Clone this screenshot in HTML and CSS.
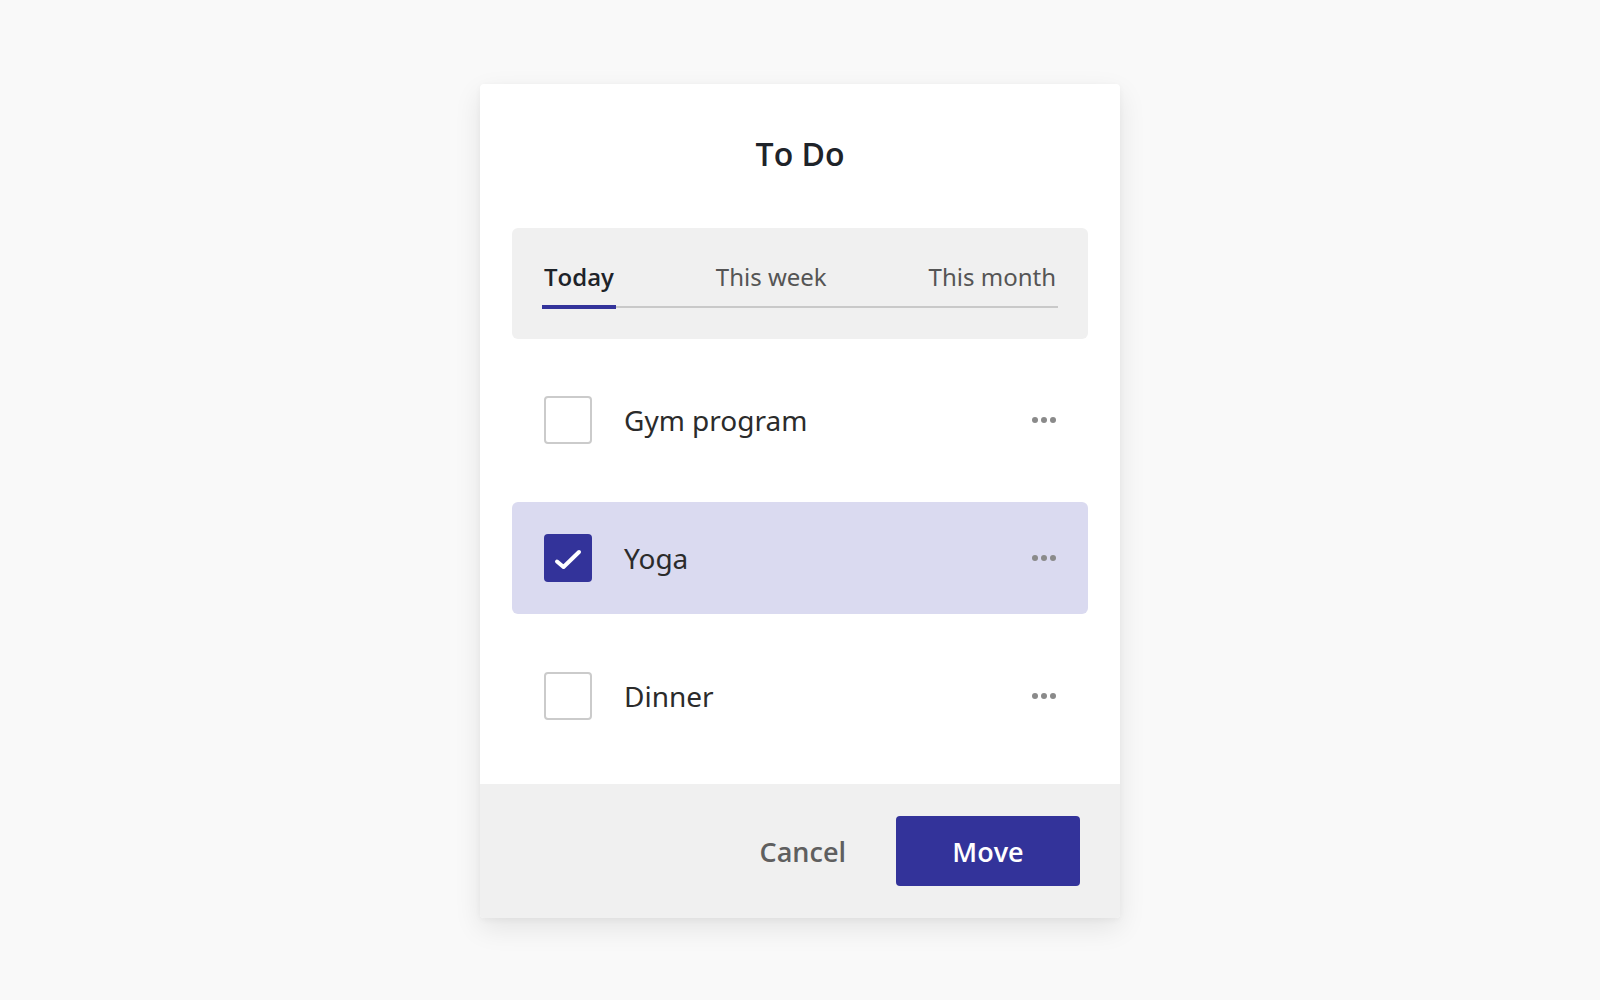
FILE: index.html
```html
<!DOCTYPE html>
<html lang="en">
<head>
<meta charset="utf-8">
<title>To Do</title>
<link rel="stylesheet" href="styles.css">
</head>
<body>
<div class="page">
  <div class="dialog">
    <div class="dialog-body">
      <h1 class="title">To Do</h1>
      <div class="tabs-box">
        <div class="tabs">
          <div class="tab active">Today</div>
          <div class="tab">This week</div>
          <div class="tab">This month</div>
        </div>
      </div>
      <ul class="list">
        <li class="item">
          <span class="check"></span>
          <span class="label">Gym program</span>
          <span class="more"><i></i><i></i><i></i></span>
        </li>
        <li class="item selected">
          <span class="check checked">
            <svg viewBox="0 0 48 48" width="48" height="48"><path d="M13 27.5 L19.5 33 L35 18" fill="none" stroke="#fff" stroke-width="4" stroke-linecap="round" stroke-linejoin="round"/></svg>
          </span>
          <span class="label">Yoga</span>
          <span class="more"><i></i><i></i><i></i></span>
        </li>
        <li class="item">
          <span class="check"></span>
          <span class="label">Dinner</span>
          <span class="more"><i></i><i></i><i></i></span>
        </li>
      </ul>
    </div>
    <div class="dialog-footer">
      <button class="btn btn-cancel">Cancel</button>
      <button class="btn btn-primary">Move</button>
    </div>
  </div>
</div>
</body>
</html>
```

FILE: styles.css
```css
* { box-sizing: border-box; }
html, body {
  margin: 0;
  padding: 0;
  background: #f9f9f9;
  font-family: "Noto Sans", "Open Sans", "Liberation Sans", sans-serif;
}
.page {
  min-height: 100vh;
  padding-top: 2px;
  display: flex;
  align-items: center;
  justify-content: center;
}
.dialog {
  width: 640px;
  background: #fff;
  border-radius: 4px;
  overflow: hidden;
  box-shadow: 0 10px 28px rgba(0, 0, 0, 0.09), 0 2px 6px rgba(0, 0, 0, 0.04);
}
.dialog-body {
  padding: 50px 32px 32px;
}
.title {
  margin: 0 0 54px;
  text-align: center;
  font-family: "Open Sans", "Noto Sans", sans-serif;
  font-size: 32px;
  line-height: 40px;
  font-weight: 600;
  color: #1e2329;
}
.tabs-box {
  background: #f0f0f0;
  border-radius: 6px;
  padding: 32px 30px 30px;
}
.tabs {
  display: flex;
  justify-content: space-between;
  background: linear-gradient(#c9c9c9, #c9c9c9) left bottom 1px / 100% 2px no-repeat;
}
.tab {
  font-size: 24px;
  line-height: 33px;
  color: #555;
  padding: 0 2px 12px;
  border-bottom: 4px solid transparent;
}
.tab.active {
  font-family: "Open Sans", "Noto Sans", sans-serif;
  color: #1e2329;
  font-weight: 600;
  border-bottom-color: #33339a;
}
.list {
  list-style: none;
  margin: 25px 0 0;
  padding: 0;
  display: flex;
  flex-direction: column;
  gap: 26px;
}
.item {
  height: 112px;
  display: flex;
  align-items: center;
  padding: 0 32px;
  border-radius: 6px;
}
.item.selected {
  background: #dadaf0;
}
.check {
  width: 48px;
  height: 48px;
  flex: none;
  border: 2px solid #cbcbcb;
  border-radius: 4px;
  background: #fff;
  display: flex;
}
.check.checked {
  border: none;
  background: #33339a;
}
.label {
  margin-left: 32px;
  flex: 1;
  font-size: 28px;
  line-height: 38px;
  color: #2b2b2b;
}
.more {
  display: flex;
  width: 24px;
  justify-content: space-between;
}
.more i {
  display: block;
  width: 6px;
  height: 6px;
  border-radius: 50%;
  background: #8a8a8a;
}
.dialog-footer {
  background: #f0f0f0;
  padding: 32px 40px;
  display: flex;
  justify-content: flex-end;
  gap: 26px;
}
.btn {
  font-family: "Open Sans", "Noto Sans", sans-serif;
  font-size: 27px;
  font-weight: 600;
  height: 70px;
  border: none;
  border-radius: 4px;
  cursor: pointer;
}
.btn-cancel {
  background: transparent;
  color: #5f5f5f;
  padding: 0 24px;
}
.btn-primary {
  width: 184px;
  background: #33339a;
  color: #fff;
}
```
